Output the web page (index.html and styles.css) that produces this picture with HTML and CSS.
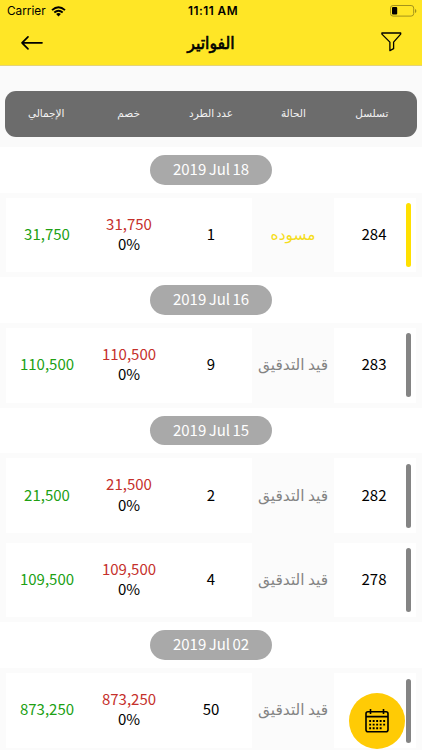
FILE: index.html
```
<!DOCTYPE html>
<html lang="ar" dir="rtl">
<head>
  <meta charset="UTF-8">
  <meta name="viewport" content="width=device-width, initial-scale=1.0">
  <title>الفواتير</title>
  <link rel="stylesheet" href="styles.css">
</head>
<body>
  <header class="header">
    <div class="status-bar" dir="ltr">
      <div class="carrier">
        <span>Carrier</span>
        <svg width="15" height="11" viewBox="0 0 15 11">
          <path d="M1 4.1Q7.5-1.6 14 4.1M3.3 6.5Q7.5 2.9 11.7 6.5" fill="none" stroke="#000" stroke-width="1.9"/>
          <path d="M5.1 8.1Q7.5 6.1 9.9 8.1L7.5 10.5z"/>
        </svg>
      </div>
      <div class="clock">11:11 AM</div>
      <svg class="battery" width="27" height="12" viewBox="0 0 27 12">
        <rect x=".5" y=".5" width="23.2" height="10.6" rx="2.6" fill="none" stroke="#a3931b"/>
        <rect x="2" y="2" width="5.2" height="7.6" rx="1"/>
        <path d="M25 4v4q1.4-.6 1.4-2T25 4z" fill="#a3931b"/>
      </svg>
    </div>
    <div class="nav-bar" dir="ltr">
      <svg class="back" width="24" height="16" viewBox="0 0 24 16" fill="none" stroke="#000" stroke-width="1.7" stroke-linecap="round" stroke-linejoin="round">
        <path d="M22 7.8H2M8 1.8L2 7.8l6 6"/>
      </svg>
      <h1 class="title" dir="rtl">الفواتير</h1>
      <svg class="filter" width="21" height="20" viewBox="0 0 21 20" fill="none" stroke="#000" stroke-width="1.3" stroke-linejoin="round">
        <path d="M.9 1h18.8v1.1l-7.1 8v6.6l-3.7 1.9v-8.5l-8-8z"/>
      </svg>
    </div>
  </header>

  <main>
    <div class="table-head">
      <div class="serial">تسلسل</div>
      <div>الحالة</div>
      <div>عدد الطرد</div>
      <div>خصم</div>
      <div>الإجمالي</div>
    </div>

    <div class="date-row"><span class="date" dir="ltr">2019 Jul 18</span></div>
    <div class="invoice draft">
      <div class="cell serial">284</div>
      <div class="cell status">مسوده</div>
      <div class="cell">1</div>
      <div class="cell discount" dir="ltr"><span class="amount">31,750</span><span>0%</span></div>
      <div class="cell total">31,750</div>
    </div>

    <div class="date-row"><span class="date" dir="ltr">2019 Jul 16</span></div>
    <div class="invoice">
      <div class="cell serial">283</div>
      <div class="cell status">قيد التدقيق</div>
      <div class="cell">9</div>
      <div class="cell discount" dir="ltr"><span class="amount">110,500</span><span>0%</span></div>
      <div class="cell total">110,500</div>
    </div>

    <div class="date-row"><span class="date" dir="ltr">2019 Jul 15</span></div>
    <div class="invoice">
      <div class="cell serial">282</div>
      <div class="cell status">قيد التدقيق</div>
      <div class="cell">2</div>
      <div class="cell discount" dir="ltr"><span class="amount">21,500</span><span>0%</span></div>
      <div class="cell total">21,500</div>
    </div>
    <div class="invoice">
      <div class="cell serial">278</div>
      <div class="cell status">قيد التدقيق</div>
      <div class="cell">4</div>
      <div class="cell discount" dir="ltr"><span class="amount">109,500</span><span>0%</span></div>
      <div class="cell total">109,500</div>
    </div>

    <div class="date-row"><span class="date" dir="ltr">2019 Jul 02</span></div>
    <div class="invoice">
      <div class="cell serial"></div>
      <div class="cell status">قيد التدقيق</div>
      <div class="cell">50</div>
      <div class="cell discount" dir="ltr"><span class="amount">873,250</span><span>0%</span></div>
      <div class="cell total">873,250</div>
    </div>
  </main>

  <button class="calendar-btn" aria-label="التاريخ">
    <svg width="24" height="24" viewBox="0 0 24 24" fill="none" stroke="#000" stroke-width="1.6">
      <rect x="1" y="2.8" width="22" height="20" rx="2"/>
      <path d="M1 7.6h22M5.5 0v5M18.5 0v5"/>
      <path d="M4.2 12h16M4.2 15.6h16M4.2 19.2h12.6" stroke-width="1.9" stroke-dasharray="1.9 1.6"/>
    </svg>
  </button>
</body>
</html>
```
FILE: styles.css
```
* {
  box-sizing: border-box;
}
body {
  margin: 0;
  height: 750px;
  overflow: hidden;
  background-color: #fafafa;
  font-family: "Noto Sans CJK SC", "DejaVu Sans", sans-serif;
  font-size: 15px;
  color: #000;
}
.header {
  height: 66px;
  background-color: #ffe626;
  border-bottom: 1px solid #e3d37a;
}
.status-bar {
  display: grid;
  grid-template-columns: 1fr auto 1fr;
  align-items: center;
  height: 22px;
  padding: 0 5px 0 7px;
  font-family: Inter, sans-serif;
  font-size: 11.8px;
}
.carrier {
  display: flex;
  align-items: center;
  gap: 5px;
}
.clock {
  padding-left: 2px;
  font-weight: 600;
  letter-spacing: .5px;
}
.battery {
  justify-self: end;
}
.nav-bar {
  display: grid;
  grid-template-columns: 1fr auto 1fr;
  align-items: center;
  height: 42px;
  padding: 0 20px;
}
.title {
  margin: 0;
  font-family: "DejaVu Sans Condensed", "DejaVu Sans", sans-serif;
  font-size: 17.5px;
  font-weight: 400;
  line-height: 20px;
  -webkit-text-stroke: .6px #000;
}
.filter {
  justify-self: end;
  margin-bottom: 2px;
}
.table-head {
  display: grid;
  grid-template-columns: repeat(5, 1fr);
  align-items: center;
  height: 46px;
  margin: 25px 5px 10px;
  padding-bottom: 3px;
  border-radius: 11px;
  background-color: #6c6c6c;
  color: #f2f2f2;
  font-size: 10.5px;
  text-align: center;
}
.table-head .serial {
  padding-right: 8px;
}
.date-row {
  display: flex;
  justify-content: center;
  height: 45.7px;
  padding-top: 8px;
  background-color: #fff;
}
.date {
  width: 122px;
  height: 29.5px;
  border-radius: 15px;
  background-color: #a9a9a9;
  color: #fff;
  line-height: 27px;
  text-align: center;
  word-spacing: -1px;
}
.invoice {
  position: relative;
  display: grid;
  grid-template-columns: repeat(5, 1fr);
  height: 84.6px;
  padding: 5px 6px;
  background-color: #fbfbfb;
}
.cell {
  display: flex;
  align-items: center;
  justify-content: center;
  padding-bottom: 3px;
  background-color: #fff;
  white-space: nowrap;
}
.serial {
  padding-right: 2px;
}
.status {
  padding-bottom: 4px;
  background-color: #fbfbfb;
  color: #838383;
  font-size: 15.4px;
}
.discount {
  flex-direction: column;
  padding-bottom: 2px;
  line-height: 20.3px;
}
.amount {
  color: #c5302b;
}
.total {
  color: #20a013;
}
/* colored status marker on the edge of the row */
.invoice::after {
  content: "";
  position: absolute;
  top: 10.5px;
  right: 11.5px;
  width: 4.5px;
  height: 64px;
  border-radius: 3px;
  background-color: #848484;
}
.draft::after {
  background-color: #ffe000;
}
.draft .status {
  color: #f5dd1c;
}
.calendar-btn {
  position: fixed;
  left: 349px;
  top: 693px;
  display: flex;
  align-items: center;
  justify-content: center;
  width: 56px;
  height: 56px;
  padding: 0;
  border: none;
  border-radius: 50%;
  background-color: #ffcb05;
}
```
